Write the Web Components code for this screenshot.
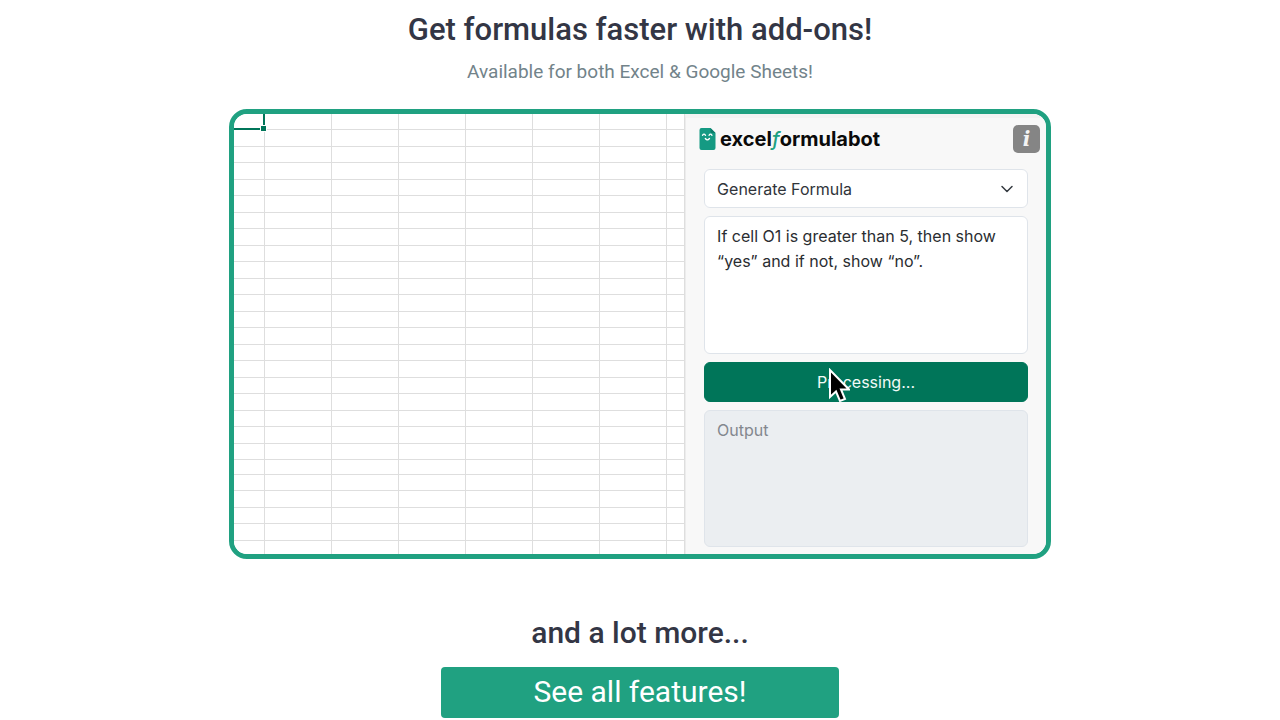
<!DOCTYPE html>
<html lang="en">
<head>
<meta charset="utf-8">
<meta name="viewport" content="width=device-width, initial-scale=1">
<title>Get formulas faster with add-ons!</title>
<style>
    :root {
        --green: #20a181;
        --green-dark: #007559;
        --ink: #333645;
        --muted: #72838a;
        --field-border: #dfe4ea;
    }

    body {
        margin: 0;
        background: #fff;
        color: var(--ink);
        font-family: Roboto, "Liberation Sans", sans-serif;
    }
</style>
</head>
<body>
<addons-page></addons-page>

<script>
/**
 * section-heading: centred title with an optional line below
 */
class SectionHeading extends HTMLElement {
    constructor() {
        super();
        this.attachShadow({ mode: 'open' });

        this.shadowRoot.innerHTML = `
            <style>
                :host {
                    display: block;
                    text-align: center;
                }

                h2 {
                    margin: 0;
                    font-size: var(--heading-size, 30px);
                    line-height: 36px;
                    font-weight: 500;
                }

                ::slotted(p) {
                    margin: 12px 0 0;
                    color: var(--muted);
                    font-size: 19px;
                    line-height: 24px;
                }
            </style>

            <h2><slot></slot></h2>
            <slot name="sub"></slot>
        `;
    }
}

/**
 * sheet-grid: empty spreadsheet with the first cell selected
 */
class SheetGrid extends HTMLElement {
    #rows = 27;
    #columns = 8;

    constructor() {
        super();
        this.attachShadow({ mode: 'open' });

        this.shadowRoot.innerHTML = `
            <style>
                :host {
                    display: block;
                    overflow: hidden;
                    background: #fff;
                }

                table {
                    width: 100%;
                    border-collapse: separate;
                    border-spacing: 0;
                    table-layout: fixed;
                }

                col { width: 67px; }
                col:first-child { width: 31px; }
                col:last-child { width: auto; }

                tr { height: 16px; }
                tr:nth-child(even) { height: 17px; }
                tr:nth-child(22) { height: 15px; }

                td {
                    box-sizing: border-box;
                    padding: 0;
                    border-right: 1px solid #dedede;
                    border-bottom: 1px solid #dedede;
                }

                td.selected {
                    position: relative;
                    border-right: 2px solid var(--green-dark);
                    border-bottom: 2px solid var(--green-dark);
                }

                .handle {
                    position: absolute;
                    right: -4px;
                    bottom: -4px;
                    width: 5px;
                    height: 5px;
                    background: var(--green-dark);
                    border: 1px solid #fff;
                }
            </style>

            <table aria-label="Sheet">
                <colgroup></colgroup>
                <tbody></tbody>
            </table>
        `;

        this.render();
    }

    render() {
        const colgroup = this.shadowRoot.querySelector('colgroup');
        const body = this.shadowRoot.querySelector('tbody');

        for (let i = 0; i < this.#columns; i++) {
            colgroup.appendChild(document.createElement('col'));
        }

        for (let r = 0; r < this.#rows; r++) {
            const row = document.createElement('tr');
            for (let c = 0; c < this.#columns; c++) {
                row.appendChild(document.createElement('td'));
            }
            body.appendChild(row);
        }

        const first = body.querySelector('td');
        first.className = 'selected';
        first.innerHTML = '<span class="handle"></span>';
    }
}

/**
 * bot-logo: sheet face and word mark
 */
class BotLogo extends HTMLElement {
    constructor() {
        super();
        this.attachShadow({ mode: 'open' });

        this.shadowRoot.innerHTML = `
            <style>
                :host {
                    display: flex;
                    align-items: center;
                    gap: 4px;
                    color: #0a0a0a;
                    font-family: Inter, "Liberation Sans", sans-serif;
                    font-size: 20px;
                    line-height: 24px;
                    font-weight: 700;
                }

                svg { flex: none; }

                i {
                    color: var(--green);
                    font-weight: 500;
                }
            </style>

            <svg width="17" height="24" viewBox="0 0 17 24" aria-hidden="true">
                <path d="M2.500 1h9l5 5v15a2 2 0 0 1-2 2h-12a2 2 0 0 1-2-2V3a2 2 0 0 1 2-2z" fill="#159a83"/>
                <path d="M11.500 1v3.500a1.500 1.500 0 0 0 1.500 1.500h3.500z" fill="#0b7d69"/>
                <path d="M3.500 8.300q1.500-2.200 3 0M10 8.300q1.500-2.200 3 0M6.300 11.500q2 2.600 4.200 0" fill="none" stroke="#fff" stroke-width="1.300" stroke-linecap="round"/>
            </svg>
            <span>excel<i>f</i>ormulabot</span>
        `;
    }
}

/**
 * formula-panel: the add-on's side pane
 */
class FormulaPanel extends HTMLElement {
    constructor() {
        super();
        this.attachShadow({ mode: 'open' });

        this.shadowRoot.innerHTML = `
            <style>
                :host {
                    display: block;
                    box-sizing: border-box;
                    background: #f8f8f8;
                    border-left: 1px solid #ececec;
                    border-top: 4px solid #f3f3f3;
                    font-family: Inter, "Liberation Sans", sans-serif;
                }

                header {
                    display: flex;
                    align-items: center;
                    justify-content: space-between;
                    padding: 7px 6px 0 13px;
                }

                .info {
                    display: grid;
                    place-items: center;
                    width: 27px;
                    height: 28px;
                    padding: 0;
                    border: 0;
                    border-radius: 5px;
                    background: #858585;
                    color: #f4f4f4;
                    font: italic bold 20px/24px "DejaVu Serif", "Liberation Serif", serif;
                }

                form {
                    display: grid;
                    gap: 8px;
                    padding: 16px 18px 7px;
                }

                .picker {
                    display: grid;
                    align-items: center;
                }

                .picker > * { grid-area: 1 / 1; }

                .picker svg {
                    justify-self: end;
                    margin-right: 14px;
                    pointer-events: none;
                }

                select,
                textarea,
                .submit {
                    display: block;
                    box-sizing: border-box;
                    width: 100%;
                    margin: 0;
                    border: 1px solid var(--field-border);
                    border-radius: 6px;
                    font-family: inherit;
                    font-size: 16px;
                }

                select {
                    height: 39px;
                    padding: 0 12px;
                    appearance: none;
                    background: #fff;
                    color: #30343a;
                }

                textarea {
                    height: 138px;
                    padding: 7px 12px;
                    resize: none;
                    background: #fff;
                    color: #2a2d31;
                    line-height: 25px;
                }

                textarea.output {
                    height: 137px;
                    background: #ebeef1;
                }

                textarea::placeholder { color: #83878e; }

                .submit {
                    position: relative;
                    height: 40px;
                    padding: 0;
                    border-color: var(--green-dark);
                    background: var(--green-dark);
                    color: #f2faf7;
                }

                .pointer {
                    position: absolute;
                    left: 123px;
                    top: 5px;
                }
            </style>

            <header>
                <bot-logo></bot-logo>
                <button class="info" type="button" aria-label="Information">i</button>
            </header>

            <form>
                <div class="picker">
                    <select aria-label="Task">
                        <option>Generate Formula</option>
                    </select>
                    <svg width="14" height="10" viewBox="0 0 14 10" aria-hidden="true">
                        <path d="M2 2.500l5 5 5-5" fill="none" stroke="#343a40" stroke-width="1.500" stroke-linecap="round" stroke-linejoin="round"/>
                    </svg>
                </div>
                <textarea aria-label="Prompt">If cell O1 is greater than 5, then show “yes” and if not, show “no”.</textarea>
                <button class="submit" type="button">
                    Processing...
                    <svg class="pointer" width="22" height="36" viewBox="0 0 22 36" aria-hidden="true">
                        <path d="M2 2v27l6-5.500 4 9.500 5-2-4-9.500h8z" fill="#000" stroke="#fff" stroke-width="2"/>
                    </svg>
                </button>
                <textarea class="output" aria-label="Output" placeholder="Output" readonly></textarea>
            </form>
        `;
    }
}

/**
 * demo-frame: rounded frame with the sheet beside the pane
 */
class DemoFrame extends HTMLElement {
    constructor() {
        super();
        this.attachShadow({ mode: 'open' });

        this.shadowRoot.innerHTML = `
            <style>
                :host {
                    display: grid;
                    grid-template-columns: minmax(0, 5fr) minmax(0, 4fr);
                    box-sizing: border-box;
                    width: 100%;
                    max-width: 822px;
                    overflow: hidden;
                    border: 5px solid var(--green);
                    border-radius: 18px;
                }

                /* the pane sets the height, the sheet is cut off at it */
                ::slotted(sheet-grid) {
                    height: 0;
                    min-height: 100%;
                }
            </style>

            <slot></slot>
        `;
    }
}

/**
 * addons-page
 */
class AddonsPage extends HTMLElement {
    constructor() {
        super();
        this.attachShadow({ mode: 'open' });

        this.shadowRoot.innerHTML = `
            <style>
                :host { display: block; }

                main {
                    display: flex;
                    flex-direction: column;
                    align-items: center;
                    padding: 12px 16px 3px;
                }

                .lead { --heading-size: 31px; }

                demo-frame { margin: 25px 0 56px; }

                .cta {
                    box-sizing: border-box;
                    width: 100%;
                    max-width: 398px;
                    margin-top: 16px;
                    padding: 7px 16px 8px;
                    border-radius: 4px;
                    background: var(--green);
                    color: #fff;
                    font-size: 30px;
                    line-height: 36px;
                    text-align: center;
                    text-decoration: none;
                }
            </style>

            <main>
                <section-heading class="lead">
                    Get formulas faster with add-ons!
                    <p slot="sub">Available for both Excel &amp; Google Sheets!</p>
                </section-heading>

                <demo-frame>
                    <sheet-grid></sheet-grid>
                    <formula-panel></formula-panel>
                </demo-frame>

                <section-heading>and a lot more...</section-heading>
                <a class="cta" href="#features">See all features!</a>
            </main>
        `;
    }
}

customElements.define('section-heading', SectionHeading);
customElements.define('sheet-grid', SheetGrid);
customElements.define('bot-logo', BotLogo);
customElements.define('formula-panel', FormulaPanel);
customElements.define('demo-frame', DemoFrame);
customElements.define('addons-page', AddonsPage);
</script>
</body>
</html>
